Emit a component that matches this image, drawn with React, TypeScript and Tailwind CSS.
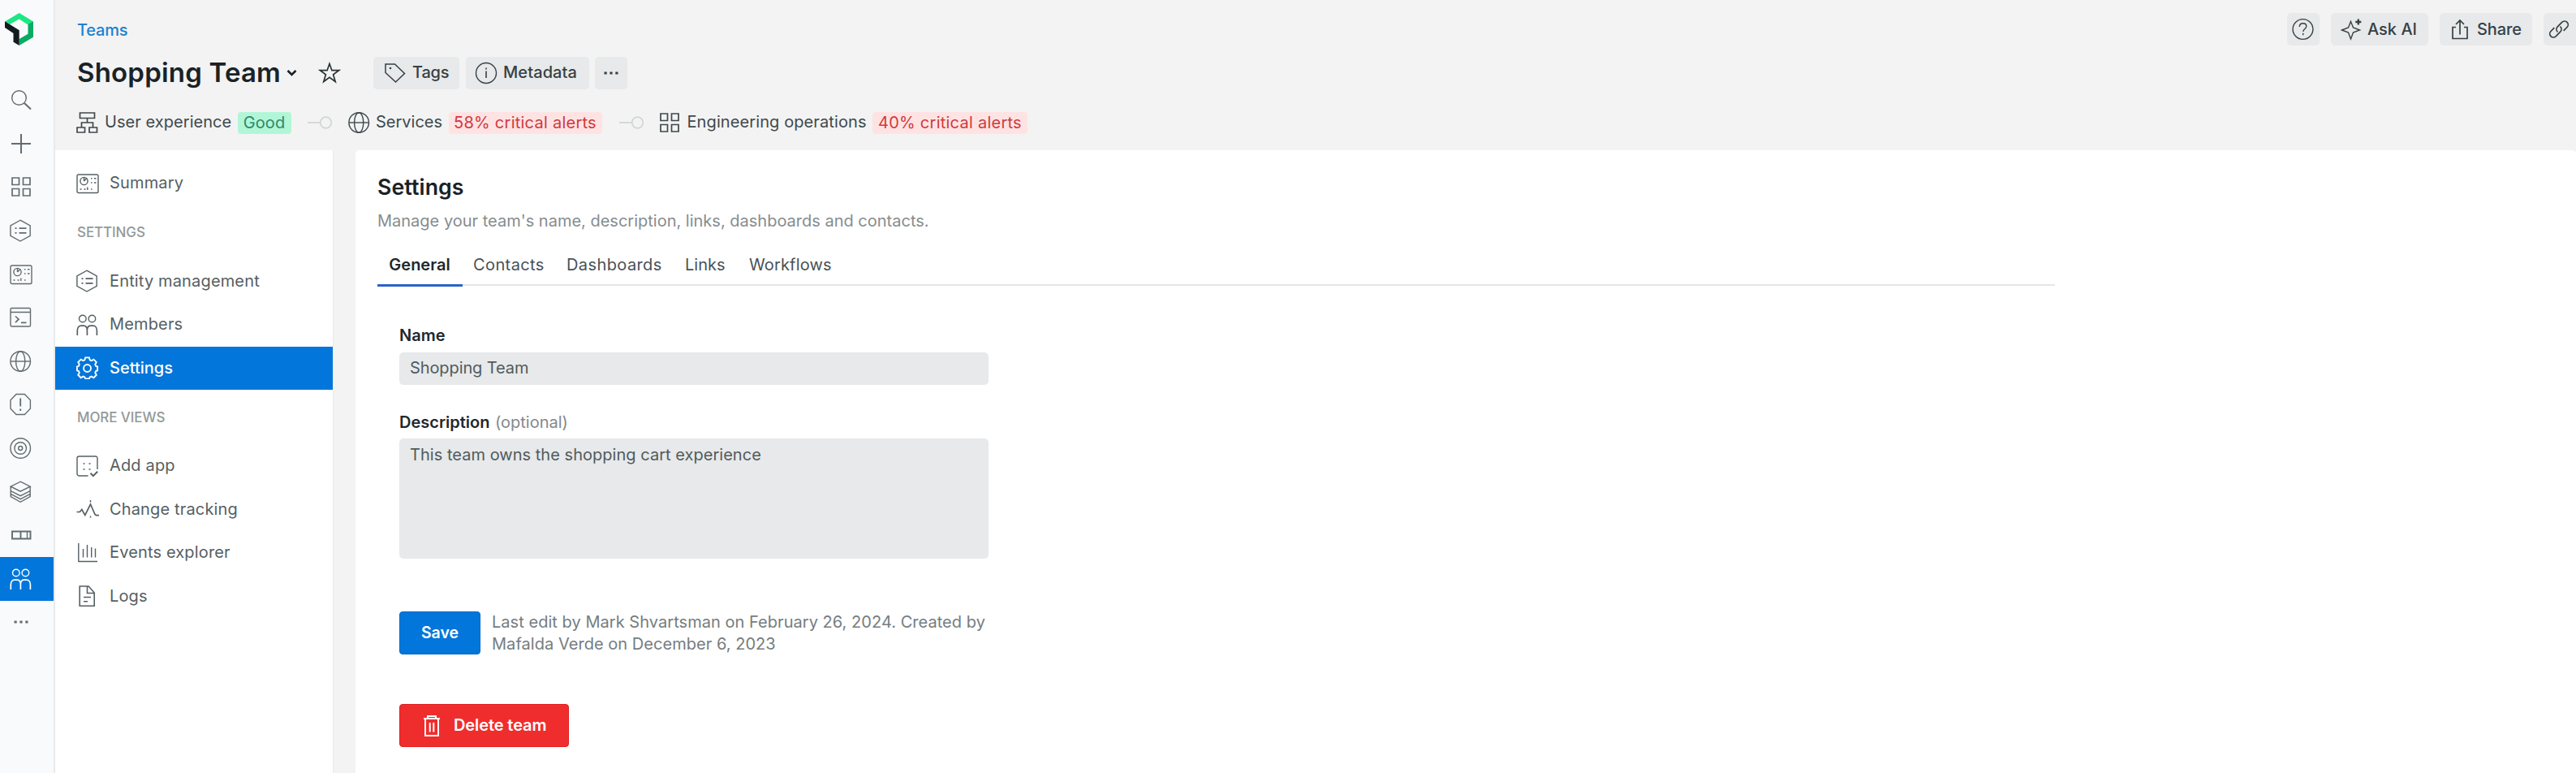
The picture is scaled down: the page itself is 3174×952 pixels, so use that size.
import type { ReactNode } from "react";

function Icon({ children, className = "" }: { children: ReactNode; className?: string }) {
  return (
    <svg
      viewBox="0 0 28 28"
      fill="none"
      stroke="currentColor"
      strokeWidth="1.4"
      className={`h-7 w-7 shrink-0 ${className}`}
    >
      {children}
    </svg>
  );
}

const Search = () => (
  <Icon>
    <circle cx="11.5" cy="11.5" r="8.8" />
    <path d="M18 18l8 7.5" strokeWidth="2" />
  </Icon>
);
const Plus = () => (
  <Icon>
    <path d="M14 2v24M2 14h24" strokeWidth="2" />
  </Icon>
);
const Grid = () => (
  <Icon>
    <path d="M3 3h8.5v8.5H3zM16.5 3H25v8.5h-8.5zM3 16.5h8.5V25H3zM16.5 16.5H25V25h-8.5z" strokeWidth="1.7" />
  </Icon>
);
const Hexagon = () => (
  <Icon>
    <path d="M13 1.2l12.2 6.6v12.6L13 27 .9 20.400V7.800z" />
    <path d="M11.500 11.200h9M11.500 16.800h9M6.500 11.200h2M6.500 16.800h2" strokeWidth="1.700" />
  </Icon>
);
const Dashboard = () => (
  <Icon>
    <rect x="1" y="3" width="26" height="22.500" rx="1.800" />
    <circle cx="9.500" cy="11" r="4.600" />
    <path d="M9.500 11l3.500-3.800M9.500 6.400V11M18 7.800h1.500M22 7.800h2.500M18 13h1.500M22 13h2.500M4.500 21h2M9.500 21h2M13.800 18.500V22M18 21h1.500" />
  </Icon>
);
const Terminal = () => (
  <Icon>
    <rect x="1" y="2.500" width="24.500" height="22.500" rx="1.500" />
    <path d="M1 7.500h24.500M7 12.500l4 3.700-4 4M14 20.300h6.500" strokeWidth="1.700" />
  </Icon>
);
const Globe = () => (
  <Icon>
    <circle cx="13.200" cy="14" r="12.300" />
    <ellipse cx="13.200" cy="14" rx="5.600" ry="12.300" />
    <path d="M1 14h24.500" />
  </Icon>
);
const Alert = () => (
  <Icon>
    <path d="M8 1.500h10.400l7 7.200v10.600l-7 7.200H8L1 19.300V8.700z" />
    <path d="M13.200 6.500v10M13.200 19.500V22" strokeWidth="1.800" />
  </Icon>
);
const Target = () => (
  <Icon>
    <circle cx="13.200" cy="14" r="12.300" />
    <circle cx="13.200" cy="14" r="7.300" />
    <circle cx="13.200" cy="14" r="2.500" />
  </Icon>
);
const Layers = () => (
  <Icon>
    <path d="M13.200 1.200l12 6-12 6-12-6z" />
    <path d="M1.200 7.200v5.300l12 6.200 12-6.200V7.200M1.200 12.500v7.200l12 6.600 12-6.600v-7.200M1.200 16.300l12 6.300 12-6.300" />
  </Icon>
);
const Box = () => (
  <Icon>
    <path d="M3 9.500h22.500v9H3zM13.500 9.500v9" strokeWidth="1.900" />
    <path d="M21.500 9.500v9" strokeWidth="1.400" />
  </Icon>
);
const Team = () => (
  <Icon>
    <circle cx="7.800" cy="6.500" r="4.300" />
    <circle cx="19.400" cy="6.500" r="4.300" />
    <path d="M1.300 27v-6c0-3.500 2-5.800 4.700-5.800h3.200c2.700 0 4.200 2.300 4.200 5.800v6M13.400 20c.3-3 1.900-4.800 4.300-4.800h3c2.700 0 4.700 2.300 4.700 5.800v6" strokeWidth="1.700" />
  </Icon>
);
const Dots = ({ className = "" }: { className?: string }) => (
  <Icon className={className}>
    <path d="M5.500 14h3.200M12.400 14h3.200M19.300 14h3.200" strokeWidth="3" />
  </Icon>
);
const Gear = () => {
  const teeth =
    "M11.4 1.500h5.200l.8 3.200 2.100.9 2.900-1.700 3.700 3.700-1.700 2.900.9 2.100 2.200.8v5.200l-2.200.8-.9 2.100 1.700 2.900-3.700 3.700-2.900-1.700-2.100.9-.8 2.200h-5.200l-.8-2.200-2.100-.9-2.900 1.700-3.700-3.700 1.700-2.900-.9-2.100-2.200-.8v-5.200l2.200-.8.9-2.100-1.700-2.900 3.700-3.700 2.900 1.700 2.100-.9z";
  return (
    <svg viewBox="0 0 29 30" fill="none" stroke="currentColor" strokeWidth="2" className="h-7 w-7 shrink-0">
      <path d={teeth} />
      <circle cx="14" cy="15.500" r="4.800" />
    </svg>
  );
};
const AddApp = () => (
  <Icon>
    <path d="M14.500 26H3.500A2.500 2.500 0 011 23.500v-19A2.500 2.500 0 013.500 2h20A2.200 2.200 0 0126 4.200V18" />
    <path d="M17.500 22.800l3.300 3.400 5.400-5.400" strokeWidth="2" />
    <path d="M8.500 11h2M15.500 11h2M8.500 18h2M15.500 18h2" strokeWidth="1.600" />
  </Icon>
);
const Tracking = () => (
  <Icon>
    <path d="M.5 17.500h3.800l2.500-3 4 7L17.500 8l5.500 12.500 1.500 1.200h3.500" strokeWidth="1.700" />
    <path d="M17.500 3v2.500M17.500 22.500v2" strokeWidth="1.500" />
  </Icon>
);
const Events = () => (
  <Icon>
    <path d="M2.800 2v22.500H26" />
    <path d="M8.500 9v10.500M13.500 4v15.500M18.700 7v12.500M23.500 8.500v11" />
  </Icon>
);
const File = () => (
  <Icon>
    <path d="M4.200 2h11l7 8v16.300H4.200zM13.500 2v8.500h8.700M9 15.500h9M9 20.800h5" strokeWidth="1.600" />
  </Icon>
);
const Hierarchy = () => (
  <Icon>
    <path d="M4.500 2h18v6.500h-18zM1 20h9.500v6H1zM16 20h9.500v6H16zM13.500 8.500V14M6.500 20v-6h14v6" strokeWidth="1.700" />
  </Icon>
);
const Star = () => (
  <Icon>
    <path d="M14 2.500l2.900 8.200h8.600l-6.900 5.100 2.600 8.700-7.200-5.200-7.200 5.200 2.600-8.700-6.900-5.100h8.600z" strokeWidth="1.700" />
  </Icon>
);
const Tag = () => (
  <Icon>
    <path d="M2 3h11.500L25.500 14.500l-11 10.500L2 13.500z" strokeWidth="1.500" />
    <circle cx="8" cy="8" r=".6" />
  </Icon>
);
const Info = () => (
  <Icon>
    <circle cx="14" cy="14" r="12.500" />
    <path d="M14 11.500V20M14 7.500v2" strokeWidth="1.600" />
  </Icon>
);
const Help = () => (
  <Icon>
    <circle cx="13.500" cy="14" r="12.400" />
    <path d="M9.300 11c0-2.800 1.800-4.200 4.300-4.200s4.200 1.500 4.200 3.700c0 3-4 3-4 6.500M13.700 18.800v2.400" />
  </Icon>
);
const Sparkle = () => (
  <Icon>
    <path d="M12.500 4.500l3 7.500 8 3-8 3-3 8-3-8-8-3 8-3z" />
    <path d="M21.800 1.500v7M18.300 5h7" strokeWidth="2.300" />
  </Icon>
);
const ShareIcon = () => (
  <Icon>
    <path d="M9 11.500H5v14h18v-14h-4M14 20.500V3M9 8l5-5 5 5" strokeWidth="1.700" />
  </Icon>
);
const LinkIcon = () => (
  <Icon>
    <path d="M12.500 17.500c-2-2-2-4.800-.2-6.700l5.400-5.400c1.900-1.800 4.600-1.800 6.300-.1s1.700 4.400 0 6.200l-4.300 4.400M15.500 10.500c2 2 2 4.800.2 6.700l-5.400 5.400c-1.900 1.800-4.600 1.800-6.300.1s-1.700-4.400 0-6.200l4.300-4.400" strokeWidth="1.700" />
  </Icon>
);
const Trash = () => (
  <svg viewBox="0 0 22 28" fill="none" stroke="currentColor" strokeWidth="2" className="h-7 w-[22px] shrink-0">
    <path d="M1 5h20M6 5V2h10v3M3 5v21h16V5M8.700 10v11.500M13.300 10v11.500" />
  </svg>
);

const Logo = () => (
  <svg viewBox="6 16 36 40" className="h-10 w-9">
    <path fill="#1ce783" d="M6 26.500L23.700 16 41 26.500l-6.500 4L23.700 23.500 12 30z" />
    <path fill="#0aab63" d="M41 26.300v19.400L23.700 56v-8l10.800-6.200V30z" />
    <path fill="#141b20" d="M6 26.300l17.700 11V56l-7.200-4.300V41L6 34z" />
  </svg>
);

const Connector = () => (
  <svg viewBox="0 0 30 16" fill="none" stroke="#d3d6d8" strokeWidth="1.800" className="h-4 w-[30px] shrink-0">
    <path d="M0 8h15" />
    <circle cx="22.500" cy="8" r="6.800" />
  </svg>
);

const railIcons = [Search, Plus, Grid, Hexagon, Dashboard, Terminal, Globe, Alert, Target, Layers, Box, Team, Dots];

function NavItem({ icon, label, active }: { icon: ReactNode; label: string; active?: boolean }) {
  return (
    <a
      className={`flex h-[53.5px] items-center gap-[13px] pl-[26px] ${
        active ? "bg-[#0276da] font-medium text-white" : "text-[#566063]"
      }`}
    >
      {icon}
      <span className={active ? "" : "tracking-[0.15px]"}>{label}</span>
    </a>
  );
}

function NavHeading({ children }: { children: ReactNode }) {
  return (
    <div className="flex h-[67px] items-center pt-[1px] pl-[27px] text-[17px] font-medium tracking-[-0.1px] text-[#939999]">
      {children}
    </div>
  );
}

function Pill({ children, className = "" }: { children: ReactNode; className?: string }) {
  return (
    <button className={`flex h-10 shrink-0 items-center rounded-[5px] bg-[#e7e9ea] font-medium text-[#364045] ${className}`}>
      {children}
    </button>
  );
}

const tabs = [
  { label: "Contacts", className: "w-[115px] tracking-[0.4px]" },
  { label: "Dashboards", className: "w-[146px] tracking-[0.4px]" },
  { label: "Links", className: "w-[79px]" },
  { label: "Workflows", className: "tracking-[0.15px]" },
];

export default function App() {
  return (
    <div className="flex h-[952px] w-[3174px] overflow-hidden bg-[#f3f3f3] font-['Inter',sans-serif] text-[20px] leading-[26.700px] whitespace-nowrap text-[#293338]">
      <aside className="flex w-[68px] shrink-0 flex-col border-r-2 border-[#e8eaec] bg-[#f9fafc] text-[#626c70]">
        <div className="h-[96.500px] shrink-0 pt-4 pl-[6px]">
          <Logo />
        </div>
        {railIcons.map((Glyph, i) => (
          <a
            key={i}
            className={`flex h-[53.600px] shrink-0 items-center pl-3 ${i === 11 ? "bg-[#0276da] text-white" : ""}`}
          >
            <Glyph />
          </a>
        ))}
      </aside>

      <div className="flex min-w-0 flex-1 flex-col">
        <header className="h-[184.500px] shrink-0 pt-4 pl-[26px]">
          <div className="flex h-10 justify-between">
            <a className="pt-[7.500px] pl-[1px] font-medium tracking-[-0.2px] text-[#1c81d2]">Teams</a>
            <div className="flex">
              <Pill className="mr-[14px] w-10 justify-center">
                <Help />
              </Pill>
              <Pill className="mr-[14px] w-[120px] gap-[5px] pl-[12px]">
                <Sparkle />
                Ask AI
              </Pill>
              <Pill className="mr-[14px] w-[114px] gap-[7px] pl-[11px]">
                <ShareIcon />
                <span className="tracking-[-0.1px]">Share</span>
              </Pill>
              <Pill className="w-10 rounded-r-none pl-[5px]">
                <LinkIcon />
              </Pill>
            </div>
          </div>

          <div className="mt-[13.500px] flex h-10 items-center">
            <h1 className="w-[259px] pl-[1px] text-[33px] font-semibold tracking-[0.200px] text-[#1a2227]">Shopping Team</h1>
            <svg viewBox="0 0 13 10" fill="none" stroke="#1a2227" strokeWidth="2.600" className="h-[10px] w-[13px]">
              <path d="M1.500 2L6.500 7l5-5" />
            </svg>
            <div className="ml-[26px]">
              <Star />
            </div>
            <Pill className="ml-[40px] w-[106px] gap-[7px] pl-[13px]">
              <Tag />
              <span className="tracking-[-0.2px]">Tags</span>
            </Pill>
            <Pill className="ml-2 w-[152px] gap-[7px] pl-[11px]">
              <Info />
              <span className="tracking-[0.1px]">Metadata</span>
            </Pill>
            <Pill className="ml-[7px] w-10 justify-center">
              <Dots />
            </Pill>
          </div>

          <div className="mt-[28.500px] flex h-[26.500px] items-center text-[#3f494d]">
            <Hierarchy />
            <span className="ml-[7px] w-[163.500px] -mt-[2px] tracking-[0.050px]">User experience</span>
            <span className="flex h-[26.500px] w-[66px] items-center justify-center rounded-[4px] bg-[#b2f6d8] tracking-[0.1px] text-[#2c8a67]">
              Good
            </span>
            <div className="ml-5 w-[50px]">
              <Connector />
            </div>
            <Globe />
            <span className="ml-[6.500px] w-[89.500px] -mt-[2px]">Services</span>
            <span className="flex h-[26.500px] w-[189px] items-center justify-center rounded-[4px] bg-[#ffe3e3] tracking-[0.250px] text-[#cf3a3e]">
              58% critical alerts
            </span>
            <div className="ml-[21px] w-[48px]">
              <Connector />
            </div>
            <Grid />
            <span className="ml-[8px] w-[228.500px] -mt-[2px] tracking-[0.1px]">Engineering operations</span>
            <span className="flex h-[26.500px] w-[191px] items-center justify-center rounded-[4px] bg-[#ffe3e3] tracking-[0.250px] text-[#cf3a3e]">
              40% critical alerts
            </span>
          </div>
        </header>

        <div className="flex min-h-0 flex-1">
          <nav className="w-[343px] shrink-0 border-r border-[#e9eaeb] bg-white pt-[14.500px]">
            <NavItem icon={<Dashboard />} label="Summary" />
            <NavHeading>SETTINGS</NavHeading>
            <NavItem icon={<Hexagon />} label="Entity management" />
            <NavItem icon={<Team />} label="Members" />
            <NavItem icon={<Gear />} label="Settings" active />
            <NavHeading>MORE VIEWS</NavHeading>
            <NavItem icon={<AddApp />} label="Add app" />
            <NavItem icon={<Tracking />} label="Change tracking" />
            <NavItem icon={<Events />} label="Events explorer" />
            <NavItem icon={<File />} label="Logs" />
          </nav>

          <main className="ml-[27px] min-w-0 flex-1 rounded-t-[5px] bg-white pt-8 pl-[27px]">
            <h2 className="text-[26.700px] font-semibold tracking-[0.1px] text-[#1a2227]">Settings</h2>
            <p className="mt-[16px] text-[#868d8f]">
              Manage your team&apos;s name, description, links, dashboards and contacts.
            </p>
            <div className="mt-[13px] flex h-[53.500px] w-[2066.500px] border-b-2 border-[#e4e5e6]">
              <div className="-mb-[3px] flex w-[105px] justify-center border-b-3 border-[#2a62c9] pt-[14px] pr-[1px] font-semibold text-[#1f282d]">
                General
              </div>
              <div className="flex pt-[14px] pl-[13px] text-[#485256]">
                {tabs.map((tab) => (
                  <span key={tab.label} className={tab.className}>
                    {tab.label}
                  </span>
                ))}
              </div>
            </div>

            <form className="mt-[47.500px] ml-[27px] w-[726px]">
              <label className="block font-semibold text-[#1f282d]">Name</label>
              <div className="mt-[7px] flex h-10 items-center rounded-[5px] bg-[#e7e9ea] pl-[13px] tracking-[-0.1px] text-[#515b5e]">
                Shopping Team
              </div>
              <label className="mt-[33px] block font-semibold text-[#1f282d]">
                Description <span className="ml-[1.500px] font-normal text-[#838a8c]">(optional)</span>
              </label>
              <div className="mt-[7px] h-[148px] rounded-[5px] bg-[#e7e9ea] pt-[6.500px] pl-[13px] tracking-[0.030px] text-[#515b5e]">
                This team owns the shopping cart experience
              </div>
              <div className="mt-[64.500px] flex">
                <button type="button" className="h-[53.500px] w-[100px] rounded-[4px] border border-[#0068c6] bg-[#0276da] text-[19.500px] font-semibold text-white">
                  Save
                </button>
                <p className="ml-[14px] tracking-[0.040px] text-[#757d80]">
                  Last edit by Mark Shvartsman on February 26, 2024. Created by
                  <br />
                  Mafalda Verde on December 6, 2023
                </p>
              </div>
              <button
                type="button"
                className="mt-[60.500px] flex h-[53.500px] w-[209px] items-center rounded-[4px] border border-[#df1f22] bg-[#f02d2d] pl-[28px] font-semibold text-white"
              >
                <Trash />
                <span className="ml-[16px] tracking-[-0.1px]">Delete team</span>
              </button>
            </form>
          </main>
        </div>
      </div>
    </div>
  );
}
